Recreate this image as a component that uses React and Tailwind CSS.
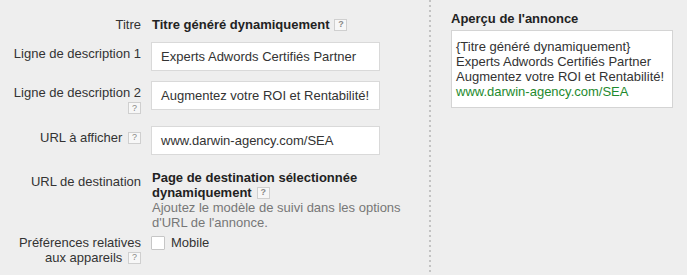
import React from "react";

function Help({ className = "" }) {
  return (
    <span
      className={`inline-flex h-[12px] w-[13px] items-center justify-center border border-[#cfcfcf] bg-[#f7f7f7] align-middle text-[9px] leading-none text-[#888] ${className}`}
    >
      ?
    </span>
  );
}

function Field({ value }) {
  return (
    <div className="flex h-[29px] w-[229px] items-center border border-[#d9d9d9] bg-white pl-[9px] text-[13px] leading-[15px] text-[#333]">
      {value}
    </div>
  );
}

export default function App() {
  return (
    <div
      className="flex h-[275px] w-[687px] bg-[#eeeeee] text-[13px] leading-[15px] text-[#333]"
      style={{ fontFamily: '"Liberation Sans", Arial, sans-serif' }}
    >
      {/* formulaire */}
      <div className="w-[429px] pt-[17px]">
        <div className="flex">
          <div className="w-[141px] text-right">Titre</div>
          <div className="ml-[11px] flex items-center font-bold text-[#222]">
            Titre généré dynamiquement
            <Help className="ml-[5px]" />
          </div>
        </div>

        <div className="mt-[10px] flex">
          <div className="w-[141px] pt-[4px] text-right">Ligne de description 1</div>
          <div className="ml-[10px]">
            <Field value="Experts Adwords Certifiés Partner" />
          </div>
        </div>

        <div className="mt-[10px] flex">
          <div className="flex w-[141px] flex-col items-end pt-[4px] text-right">
            <span>Ligne de description 2</span>
            <Help className="mt-[2px]" />
          </div>
          <div className="ml-[10px]">
            <Field value="Augmentez votre ROI et Rentabilité!" />
          </div>
        </div>

        <div className="mt-[12px] flex">
          <div className="w-[141px] pt-[4px] text-right">
            URL à afficher <Help className="ml-[2px] -mt-[2px]" />
          </div>
          <div className="ml-[10px]">
            <Field value="www.darwin-agency.com/SEA" />
          </div>
        </div>

        <div className="mt-[15px] flex">
          <div className="w-[141px] pt-[4px] text-right">URL de destination</div>
          <div className="ml-[11px]">
            <div className="font-bold text-[#222]">Page de destination sélectionnée</div>
            <div className="flex items-center font-bold text-[#222]">
              dynamiquement
              <Help className="ml-[5px]" />
            </div>
            <div className="text-[#777]">Ajoutez le modèle de suivi dans les options</div>
            <div className="text-[#777]">d'URL de l'annonce.</div>
          </div>
        </div>

        <div className="mt-[5px] flex">
          <div className="w-[141px] text-right">
            <div>Préférences relatives</div>
            <div>
              aux appareils <Help className="ml-[2px] -mt-[2px]" />
            </div>
          </div>
          <label className="ml-[10px] flex h-[15px] items-center">
            <span className="h-[14px] w-[14px] rounded-[1px] border border-[#c6c6c6] bg-white" />
            <span className="ml-[6px]">Mobile</span>
          </label>
        </div>
      </div>

      {/* séparateur */}
      <div className="h-full w-[2px] bg-[linear-gradient(#c3c3c3_40%,transparent_40%)] bg-[length:2px_5px]" />

      {/* aperçu */}
      <div className="pl-[20px] pt-[11px]">
        <div className="font-bold text-[#222]">Aperçu de l'annonce</div>
        <div className="mt-[4px] w-[222px] border border-[#d4d4d4] bg-white px-[4px] pb-[8px] pt-[8px] text-[#333]">
          <div>{"{Titre généré dynamiquement}"}</div>
          <div>Experts Adwords Certifiés Partner</div>
          <div>Augmentez votre ROI et Rentabilité!</div>
          <div className="text-[#1e8a2e]">www.darwin-agency.com/SEA</div>
        </div>
      </div>
    </div>
  );
}
